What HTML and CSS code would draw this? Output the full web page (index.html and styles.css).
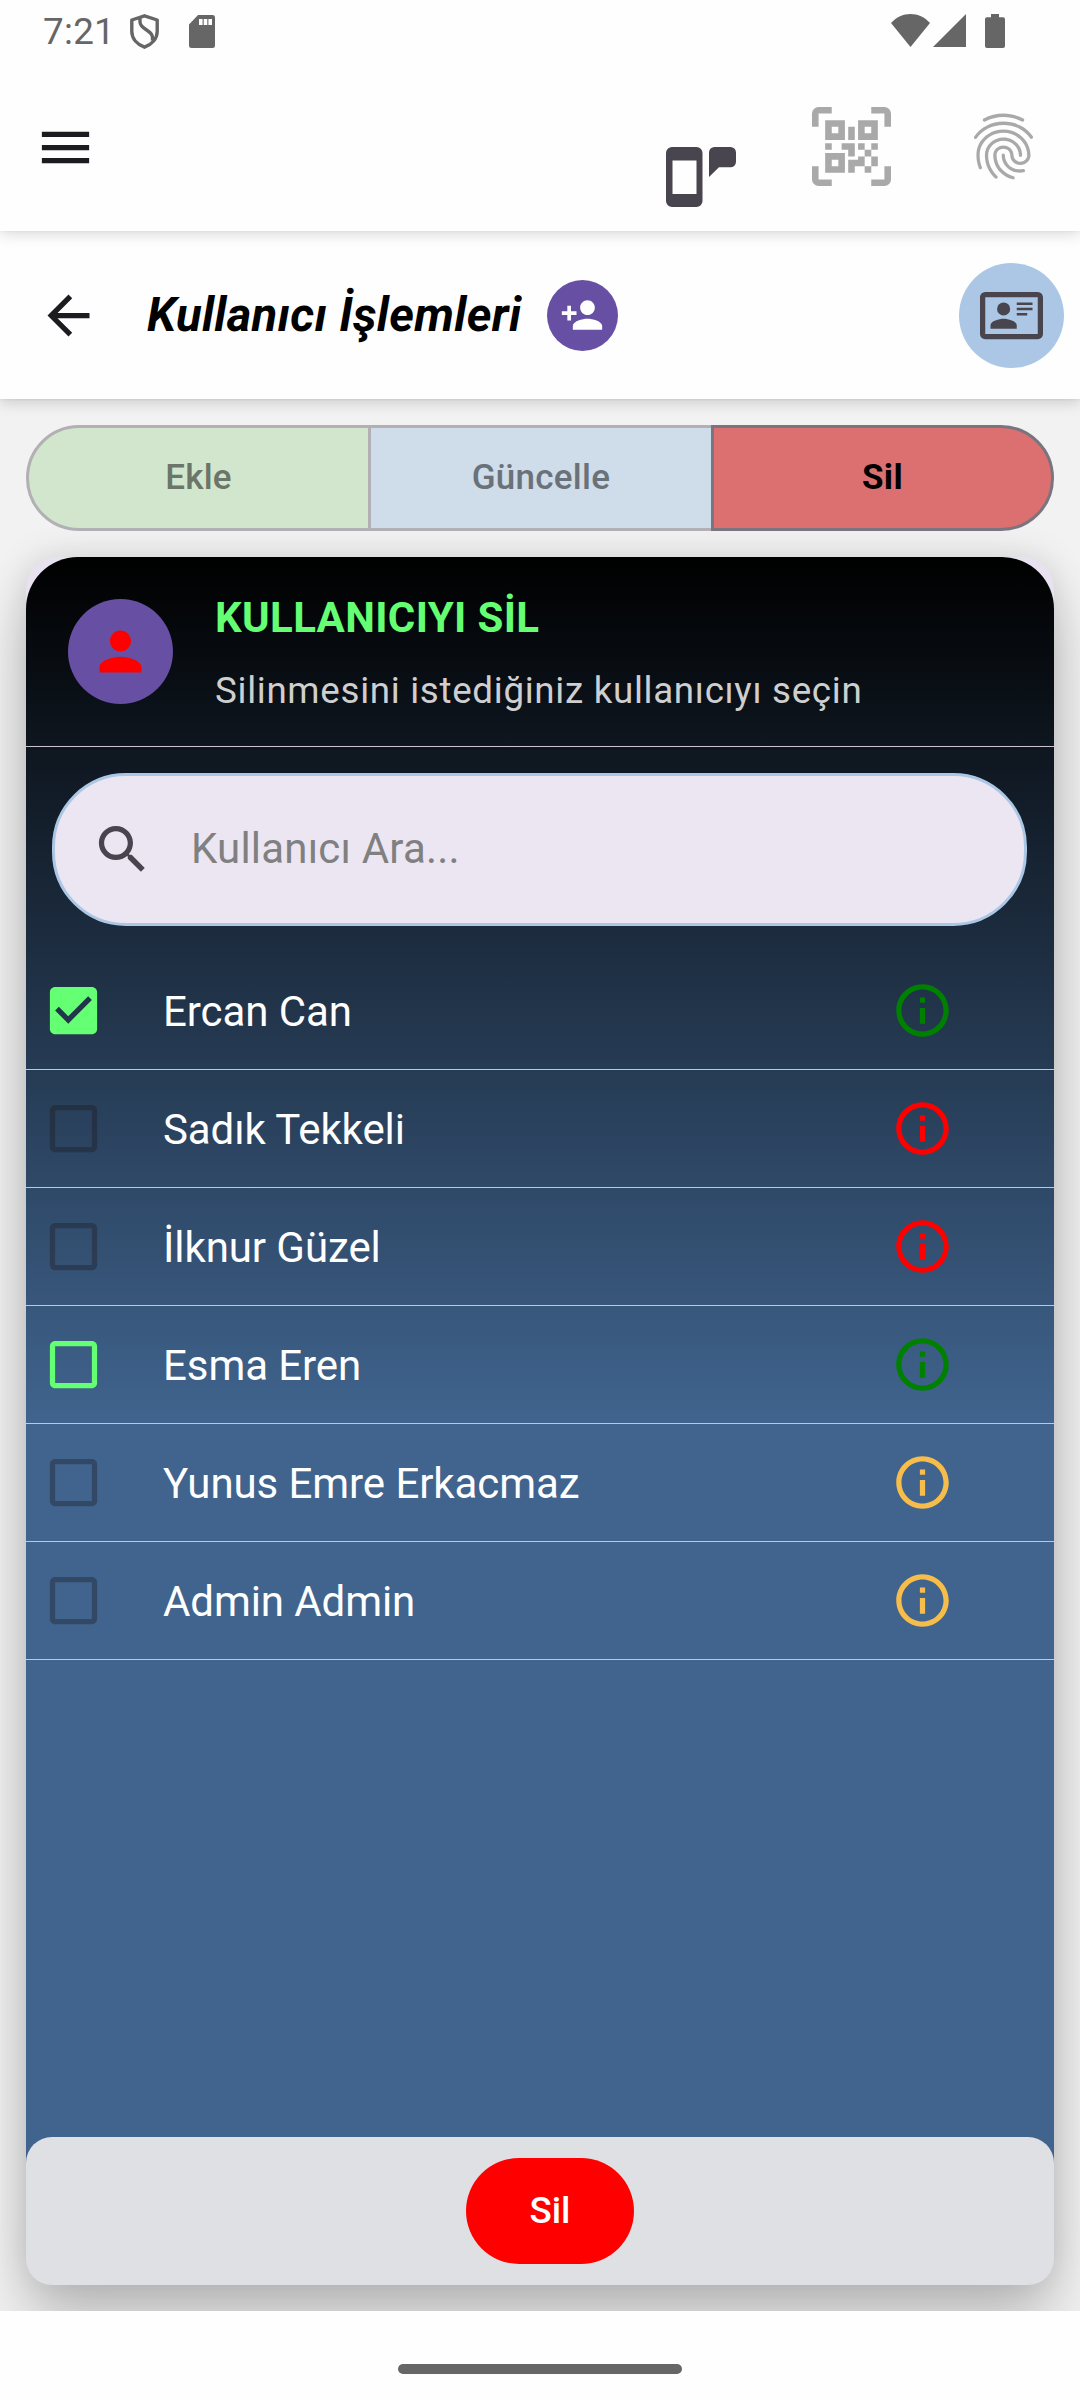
FILE: index.html
```html
<!DOCTYPE html>
<html lang="tr">
<head>
<meta charset="utf-8">
<title>Kullanıcı İşlemleri</title>
<link rel="stylesheet" href="styles.css">
</head>
<body>
<svg class="defs" aria-hidden="true">
  <symbol id="box" viewBox="0 0 24 24"><path d="M19 5v14H5V5h14m0-2H5c-1.1 0-2 .9-2 2v14c0 1.1.9 2 2 2h14c1.1 0 2-.9 2-2V5c0-1.1-.9-2-2-2z"/></symbol>
  <symbol id="box-checked" viewBox="0 0 24 24"><path d="M19 3H5c-1.11 0-2 .9-2 2v14c0 1.1.89 2 2 2h14c1.11 0 2-.9 2-2V5c0-1.1-.89-2-2-2zm-9 14l-5-5 1.41-1.41L10 14.17l7.59-7.59L19 8l-9 9z"/></symbol>
  <symbol id="info" viewBox="0 0 24 24"><path d="M11 7h2v2h-2zm0 4h2v6h-2zm1-9C6.48 2 2 6.48 2 12s4.48 10 10 10 10-4.48 10-10S17.52 2 12 2zm0 18c-4.41 0-8-3.59-8-8s3.59-8 8-8 8 3.59 8 8-3.59 8-8 8z"/></symbol>
</svg>
<div class="screen">
  <header class="topbar">
    <div class="status">
      <span class="clock">7:21</span>
      <svg class="shield" viewBox="0 0 29 35"><path fill="none" stroke="currentColor" stroke-width="3.4" stroke-linejoin="round" d="M14.5 1.8 27.2 6v11.500c0 7-5.200 12.800-12.700 15.700C7 30.300 1.800 24.500 1.800 17.500V6zM10 3.500v4.500c0 7.500 12.500 8 12.500 15.500v3"/></svg>
      <svg class="sd" viewBox="0 0 26 33"><path fill-rule="evenodd" d="M9 0h14.500A2.500 2.500 0 0 1 26 2.500v28a2.500 2.500 0 0 1-2.500 2.500h-21A2.500 2.500 0 0 1 0 30.500V9.500zM10 4v6h3.600V4zm4.700 0v6h3.600V4zm4.700 0v6H23V4z"/></svg>
      <svg class="wifi" viewBox="0 0 39 33"><path d="M19.500 33 0 9C5.500 3 12 0 19.500 0S33.500 3 39 9z"/></svg>
      <svg class="signal" viewBox="0 0 33 33"><path d="M33 0v33H0z"/></svg>
      <svg class="battery" viewBox="0 0 20 34"><path d="M6 0h8v3.300h4a2 2 0 0 1 2 2V32a2 2 0 0 1-2 2H2a2 2 0 0 1-2-2V5.300a2 2 0 0 1 2-2h4z"/></svg>
    </div>
    <div class="tools">
      <svg class="menu" viewBox="0 0 24 24"><path d="M3 6h18v2H3zm0 5h18v2H3zm0 5h18v2H3z"/></svg>
      <svg class="phone" viewBox="0 0 70 60"><path fill-rule="evenodd" d="M6 0h24.500a6 6 0 0 1 6 6v48a6 6 0 0 1-6 6H6a6 6 0 0 1-6-6V6a6 6 0 0 1 6-6zm.5 13.500v33.500h24V13.500zM48.500 0h16A5.500 5.500 0 0 1 70 5.500v9.300a5.500 5.500 0 0 1-5.500 5.500H53L43 30V5.500A5.500 5.500 0 0 1 48.500 0z"/></svg>
      <svg class="qr" viewBox="0 0 24 24"><path d="M4,4H10V10H4V4M20,4V10H14V4H20M14,15H16V13H14V11H16V13H18V11H20V13H18V15H20V18H18V20H16V18H13V20H11V16H14V15M16,15V18H18V15H16M4,20V14H10V20H4M6,6V8H8V6H6M16,6V8H18V6H16M6,16V18H8V16H6M4,11H6V13H4V11M9,11H13V15H11V13H9V11M11,6H13V10H11V6M2,2V6H0V2A2,2 0 0,1 2,0H6V2H2M22,0A2,2 0 0,1 24,2V6H22V2H18V0H22M2,18V22H6V24H2A2,2 0 0,1 0,22V18H2M22,22V18H24V22A2,2 0 0,1 22,24H18V22H22Z"/></svg>
      <svg class="finger" viewBox="0 0 24 24"><path d="M17.81 4.470c-.08 0-.16-.02-.23-.06C15.660 3.420 14 3 12.010 3c-1.980 0-3.860.47-5.570 1.410-.24.13-.54.04-.68-.2-.13-.24-.04-.55.2-.68C7.820 2.520 9.860 2 12.010 2c2.130 0 3.990.47 6.030 1.520.25.13.34.43.21.67-.09.18-.26.28-.44.28zM3.500 9.720c-.1 0-.2-.03-.29-.09-.23-.16-.28-.47-.12-.7.99-1.400 2.250-2.500 3.750-3.270C9.980 4.040 14 4.030 17.150 5.650c1.500.77 2.760 1.860 3.750 3.250.16.22.11.54-.12.7-.23.16-.54.11-.7-.12-.9-1.260-2.040-2.250-3.390-2.940-2.870-1.470-6.540-1.470-9.400.01-1.360.7-2.500 1.700-3.400 2.960-.08.14-.23.21-.39.21zm6.250 12.070c-.13 0-.26-.05-.35-.15-.87-.87-1.340-1.430-2.010-2.640-.69-1.230-1.050-2.730-1.050-4.340 0-2.970 2.540-5.390 5.660-5.390s5.660 2.420 5.660 5.390c0 .28-.22.5-.5.5s-.5-.22-.5-.5c0-2.420-2.090-4.390-4.660-4.390-2.570 0-4.660 1.970-4.660 4.390 0 1.440.32 2.770.93 3.850.64 1.150 1.080 1.640 1.850 2.420.19.2.19.51 0 .71-.11.1-.24.15-.37.15zm7.170-1.850c-1.190 0-2.240-.3-3.100-.89-1.490-1.010-2.380-2.650-2.380-4.390 0-.28.22-.5.5-.5s.5.22.5.5c0 1.410.72 2.740 1.940 3.560.71.48 1.540.71 2.540.71.24 0 .64-.03 1.040-.1.27-.05.53.13.58.41.05.27-.13.53-.41.58-.57.11-1.070.12-1.210.12zM14.910 22c-.04 0-.09-.01-.13-.02-1.590-.44-2.630-1.030-3.720-2.100-1.400-1.390-2.170-3.240-2.170-5.220 0-1.620 1.380-2.940 3.080-2.940 1.700 0 3.080 1.320 3.080 2.940 0 1.070.93 1.940 2.080 1.940s2.080-.87 2.080-1.940c0-3.770-3.250-6.830-7.250-6.830-2.840 0-5.440 1.580-6.610 4.030-.39.81-.59 1.760-.59 2.800 0 .78.07 2.010.67 3.610.1.26-.03.55-.29.64-.26.1-.55-.04-.64-.29-.49-1.310-.73-2.610-.73-3.960 0-1.200.23-2.290.68-3.240 1.330-2.790 4.280-4.600 7.510-4.600 4.550 0 8.250 3.510 8.250 7.830 0 1.620-1.380 2.940-3.080 2.940s-3.080-1.320-3.080-2.940c0-1.070-.93-1.940-2.080-1.940s-2.080.87-2.080 1.940c0 1.710.66 3.310 1.870 4.510.95.94 1.860 1.460 3.270 1.850.27.07.42.35.35.61-.05.23-.26.38-.47.38z"/></svg>
    </div>
  </header>

  <div class="titlebar">
    <svg class="back" viewBox="0 0 24 24"><path d="M20 11H7.830l5.590-5.590L12 4l-8 8 8 8 1.410-1.410L7.830 13H20v-2z"/></svg>
    <h1>Kullanıcı İşlemleri</h1>
    <span class="adduser"><svg viewBox="0 0 24 24"><path d="M15 12c2.210 0 4-1.790 4-4s-1.790-4-4-4-4 1.790-4 4 1.790 4 4 4zm-9-2V7H4v3H1v2h3v3h2v-3h3v-2H6zm9 4c-2.670 0-8 1.340-8 4v2h16v-2c0-2.660-5.330-4-8-4z"/></svg></span>
    <span class="idcard"><svg viewBox="0 0 24 24"><path d="M22,3H2C0.910,3.040 0.040,3.910 0,5V19C0.040,20.090 0.910,20.960 2,21H22C23.090,20.960 23.960,20.090 24,19V5C23.960,3.910 23.090,3.040 22,3M22,19H2V5H22V19M14,17V15.750C14,14.090 10.660,13.250 9,13.250C7.340,13.250 4,14.090 4,15.750V17H14M9,7A2.500,2.500 0 0,0 6.500,9.500A2.500,2.500 0 0,0 9,12A2.500,2.500 0 0,0 11.500,9.500A2.500,2.500 0 0,0 9,7M14,7V8H20V7H14M14,9V10H20V9H14M14,11V12H18V11H14"/></svg></span>
  </div>

  <main>
    <div class="tabs">
      <span class="tab add">Ekle</span>
      <span class="tab update">Güncelle</span>
      <span class="tab delete">Sil</span>
    </div>
    <section class="card">
      <div class="panel">
        <div class="intro">
          <span class="avatar"><svg viewBox="0 0 24 24"><path d="M12 12c2.210 0 4-1.790 4-4s-1.790-4-4-4-4 1.790-4 4 1.790 4 4 4zm0 2c-2.670 0-8 1.340-8 4v2h16v-2c0-2.660-5.330-4-8-4z"/></svg></span>
          <div>
            <h2>KULLANICIYI SİL</h2>
            <p>Silinmesini istediğiniz kullanıcıyı seçin</p>
          </div>
        </div>
        <div class="search">
          <svg viewBox="0 0 24 24"><path d="M15.500 14h-.79l-.28-.27C15.410 12.590 16 11.110 16 9.500 16 5.910 13.090 3 9.500 3S3 5.910 3 9.500 5.910 16 9.500 16c1.610 0 3.090-.59 4.230-1.570l.27.28v.79l5 4.990L20.490 19l-4.990-5zm-6 0C7.010 14 5 11.990 5 9.500S7.010 5 9.500 5 14 7.010 14 9.500 11.990 14 9.500 14z"/></svg>
          <span>Kullanıcı Ara...</span>
        </div>
        <ul class="users">
          <li><svg class="check on"><use href="#box-checked"/></svg><span>Ercan Can</span><svg class="info green"><use href="#info"/></svg></li>
          <li><svg class="check"><use href="#box"/></svg><span>Sadık Tekkeli</span><svg class="info red"><use href="#info"/></svg></li>
          <li><svg class="check"><use href="#box"/></svg><span>İlknur Güzel</span><svg class="info red"><use href="#info"/></svg></li>
          <li><svg class="check on"><use href="#box"/></svg><span>Esma Eren</span><svg class="info green"><use href="#info"/></svg></li>
          <li><svg class="check"><use href="#box"/></svg><span>Yunus Emre Erkacmaz</span><svg class="info amber"><use href="#info"/></svg></li>
          <li><svg class="check"><use href="#box"/></svg><span>Admin Admin</span><svg class="info amber"><use href="#info"/></svg></li>
        </ul>
        <div class="actions"><button class="remove" type="button">Sil</button></div>
      </div>
    </section>
  </main>
  <footer class="gesture"><span></span></footer>
</div>
</body>
</html>
```
FILE: styles.css
```css
* { box-sizing: border-box; }

body {
  margin: 0;
  font-family: Roboto, "Noto Sans", sans-serif;
}

svg { display: block; flex: none; fill: currentColor; }
.defs { display: none; }

.screen {
  display: flex;
  flex-direction: column;
  width: 1080px;
  height: 2400px;
  overflow: hidden;
  background: #fefefe;
}

/* status bar and app toolbar */
.topbar {
  position: relative;
  z-index: 2;
  height: 231px;
  background: #fefefe;
  box-shadow: 0 3px 14px rgba(0, 0, 0, .15), 0 0 3px rgba(0, 0, 0, .06);
}
.status {
  display: flex;
  align-items: flex-start;
  height: 63px;
  padding: 14px 75px 0 43px;
  color: #666;
}
.clock { width: 87px; font-size: 36.750px; line-height: 35px; letter-spacing: .3px; white-space: nowrap; }
.shield { width: 29px; height: 35px; margin-right: 30px; }
.sd { width: 26px; height: 33px; margin-top: 1px; }
.wifi { width: 39px; height: 33px; margin-left: auto; }
.signal { width: 33px; height: 33px; margin-left: 3px; }
.battery { width: 20px; height: 34px; margin-left: 19px; }

.tools { display: flex; align-items: flex-start; padding: 44px 37px 0 34px; }
.menu { width: 63px; height: 63px; margin-top: 9px; color: #1c1b1f; }
.phone { width: 70px; height: 60px; margin: 40px 76px 0 auto; color: #49454f; }
.qr { width: 79px; height: 79px; margin-right: 73px; color: #a9a9a9; }
.finger { width: 79px; height: 79px; color: #a9a9a9; }

/* page title row */
.titlebar {
  position: relative;
  z-index: 1;
  display: flex;
  align-items: center;
  height: 168px;
  padding: 0 16px 0 37px;
  background: #fefefe;
  box-shadow: 0 3px 14px rgba(0, 0, 0, .17), 0 0 3px rgba(0, 0, 0, .1);
}
.back { width: 63px; height: 63px; color: #1c1b1f; }
h1 { width: 400px; margin: 0 0 0 47px; font-size: 47.250px; line-height: 60px; font-style: italic; letter-spacing: .3px; white-space: nowrap; }
.adduser, .idcard, .avatar { display: flex; align-items: center; justify-content: center; flex: none; border-radius: 50%; }
.adduser { width: 71px; height: 71px; background: #6750a4; color: #fff; }
.adduser svg { width: 44px; height: 44px; margin-right: 2px; }
.idcard { width: 105px; height: 105px; margin-left: auto; background: #abc7e5; color: #49454f; }
.idcard svg { width: 63px; height: 63px; }

main { height: 1912px; padding: 26px; overflow: hidden; background: #f2f2f2; }

/* segmented buttons */
.tabs { display: grid; grid-template-columns: 345px 340px 343px; height: 106px; }
.tab {
  display: flex;
  align-items: center;
  justify-content: center;
  padding-bottom: 2px;
  border: 3px solid #b2b0b5;
  font-size: 35px;
  font-weight: 500;
  letter-spacing: .26px;
}
.add { border-radius: 53px 0 0 53px; background: #d1e6cc; color: #6b7569; }
.update { border-left: 0; border-right: 0; background: #cfdce9; color: #6a7178; }
.delete { border-color: #79747e; border-radius: 0 53px 53px 0; background: #dc7070; color: #000; font-weight: 700; }

/* user deletion card */
.card {
  height: 1728px;
  margin-top: 26px;
  border-radius: 32px;
  background: #e8e2f0;
  box-shadow: 0 42px 60px rgba(0, 0, 0, .2), 0 0 36px rgba(0, 0, 0, .13);
}
.panel {
  display: flex;
  flex-direction: column;
  height: 100%;
  border-radius: 52px 52px 32px 32px;
  background: linear-gradient(#000 0%, #40648e 50%);
}
.intro {
  display: flex;
  height: 190px;
  padding: 42px 42px 0;
  border-bottom: 1px solid #cac4d0;
}
.avatar { width: 105px; height: 105px; margin-right: 42px; background: #6750a4; color: #f00; }
.avatar svg { width: 63px; height: 63px; }
h2 { margin: -11px 0 0; font-size: 42px; line-height: 60px; letter-spacing: .350px; color: #64ff72; white-space: nowrap; }
p { margin: 15px 0 0; font-size: 36.750px; line-height: 56px; letter-spacing: .690px; color: #cfcfcf; white-space: nowrap; }

.search {
  display: flex;
  align-items: center;
  height: 153px;
  margin: 26px 27px 0 26px;
  padding: 0 36px;
  border: 3px solid #abc7e5;
  border-radius: 74px;
  background: #ece6f2;
  color: #49454f;
}
.search svg { width: 63px; height: 63px; }
.search span { margin: -2px 0 0 37px; font-size: 42px; letter-spacing: .2px; color: #808080; }

.users { margin: 26px 0 0; padding: 0; list-style: none; }
.users li {
  display: flex;
  align-items: center;
  height: 118px;
  padding: 0 100px 0 16px;
  border-bottom: 1px solid #cac4d0;
  font-size: 42px;
  letter-spacing: -.08px;
  color: #fff;
}
.users span { flex: 1; margin-left: 58px; padding-top: 2px; }
.check, .info { width: 63px; height: 63px; }
.check { color: rgba(28, 27, 31, .38); }
.check.on { color: #64ff72; }
.green { color: green; }
.red { color: #f00; }
.amber { color: #f7bd4b; }

.actions {
  display: flex;
  justify-content: center;
  height: 148px;
  margin-top: auto;
  padding: 21px 0 21px 20px;
  border-radius: 26px;
  background: #dfe0e4;
}
.remove {
  width: 168px;
  height: 106px;
  padding: 0 0 2px;
  border: 0;
  border-radius: 53px;
  background: #f00;
  color: #fff;
  font: 500 36.750px Roboto, "Noto Sans", sans-serif;
}

.gesture { display: flex; justify-content: center; padding-top: 53px; }
.gesture span { width: 284px; height: 10px; border-radius: 5px; background: #666; }
```
